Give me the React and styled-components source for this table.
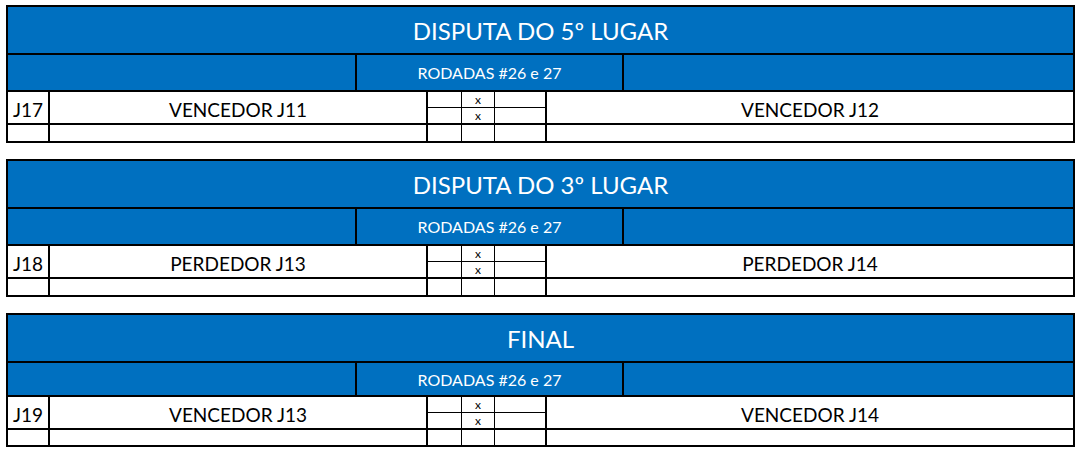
import React from "react";
import styled, { createGlobalStyle } from "styled-components";

const BLUE = "#0070c0";
const LINE = "2px solid #000";

const GlobalStyle = createGlobalStyle`
  body {
    margin: 0;
    background: #fff;
    font-family: Lato, "Liberation Sans", sans-serif;
  }
`;

const Page = styled.div`
  width: 1069px;
  padding: 5px 0 0 6px;
  display: flex;
  flex-direction: column;
  gap: 16px;
`;

const Bracket = styled.section`
  border: ${LINE};
  display: flex;
  flex-direction: column;
`;

const TitleBar = styled.div`
  height: 46px;
  background: ${BLUE};
  color: #fff;
  font-size: 24px;
  display: flex;
  align-items: center;
  justify-content: center;
  border-bottom: ${LINE};
`;

const RoundBar = styled.div`
  height: ${(p) => p.$h}px;
  display: grid;
  grid-template-columns: 347px 269px 1fr;
  background: ${BLUE};
  border-bottom: ${LINE};
`;

const RoundLabel = styled.div`
  border-left: ${LINE};
  border-right: ${LINE};
  color: #fff;
  font-size: 16px;
  display: flex;
  align-items: center;
  justify-content: center;
`;

const MatchRow = styled.div`
  height: ${(p) => p.$h}px;
  display: grid;
  grid-template-columns: 42px 378px 119px 1fr;
  grid-template-rows: ${(p) => p.$h}px;
  border-bottom: ${(p) => (p.$last ? "none" : LINE)};
`;

const Cell = styled.div`
  border-right: ${(p) => (p.$end ? "none" : LINE)};
  font-size: 19px;
  color: #000;
  display: flex;
  align-items: center;
  justify-content: center;
  padding-top: 3px;
  box-sizing: border-box;
`;

const ScoreGrid = styled.div`
  border-right: ${LINE};
  display: grid;
  grid-template-columns: 33px 32px 1fr;
  grid-auto-rows: 1fr;
  gap: 1px;
  background: #000;
`;

const ScoreCell = styled.div`
  background: #fff;
  font-size: 12px;
  display: flex;
  align-items: center;
  justify-content: center;
  line-height: 1;
`;

const Score = ({ rows }) => (
  <ScoreGrid>
    {Array.from({ length: rows }).map((_, i) => (
      <React.Fragment key={i}>
        <ScoreCell />
        <ScoreCell>{rows > 1 ? "x" : ""}</ScoreCell>
        <ScoreCell />
      </React.Fragment>
    ))}
  </ScoreGrid>
);

const brackets = [
  { title: "DISPUTA DO 5º LUGAR", game: "J17", home: "VENCEDOR J11", away: "VENCEDOR J12", sub: 35, empty: 16 },
  { title: "DISPUTA DO 3º LUGAR", game: "J18", home: "PERDEDOR J13", away: "PERDEDOR J14", sub: 35, empty: 16 },
  { title: "FINAL", game: "J19", home: "VENCEDOR J13", away: "VENCEDOR J14", sub: 32, empty: 15 },
];

const App = () => {
  return (
    <>
      <GlobalStyle />
      <Page>
        {brackets.map((b) => (
          <Bracket key={b.game}>
            <TitleBar>{b.title}</TitleBar>
            <RoundBar $h={b.sub}>
              <div />
              <RoundLabel>RODADAS #26 e 27</RoundLabel>
              <div />
            </RoundBar>
            <MatchRow $h={31}>
              <Cell>{b.game}</Cell>
              <Cell>{b.home}</Cell>
              <Score rows={2} />
              <Cell $end>{b.away}</Cell>
            </MatchRow>
            <MatchRow $h={b.empty} $last>
              <Cell />
              <Cell />
              <Score rows={1} />
              <Cell $end />
            </MatchRow>
          </Bracket>
        ))}
      </Page>
    </>
  );
};

export default App;
